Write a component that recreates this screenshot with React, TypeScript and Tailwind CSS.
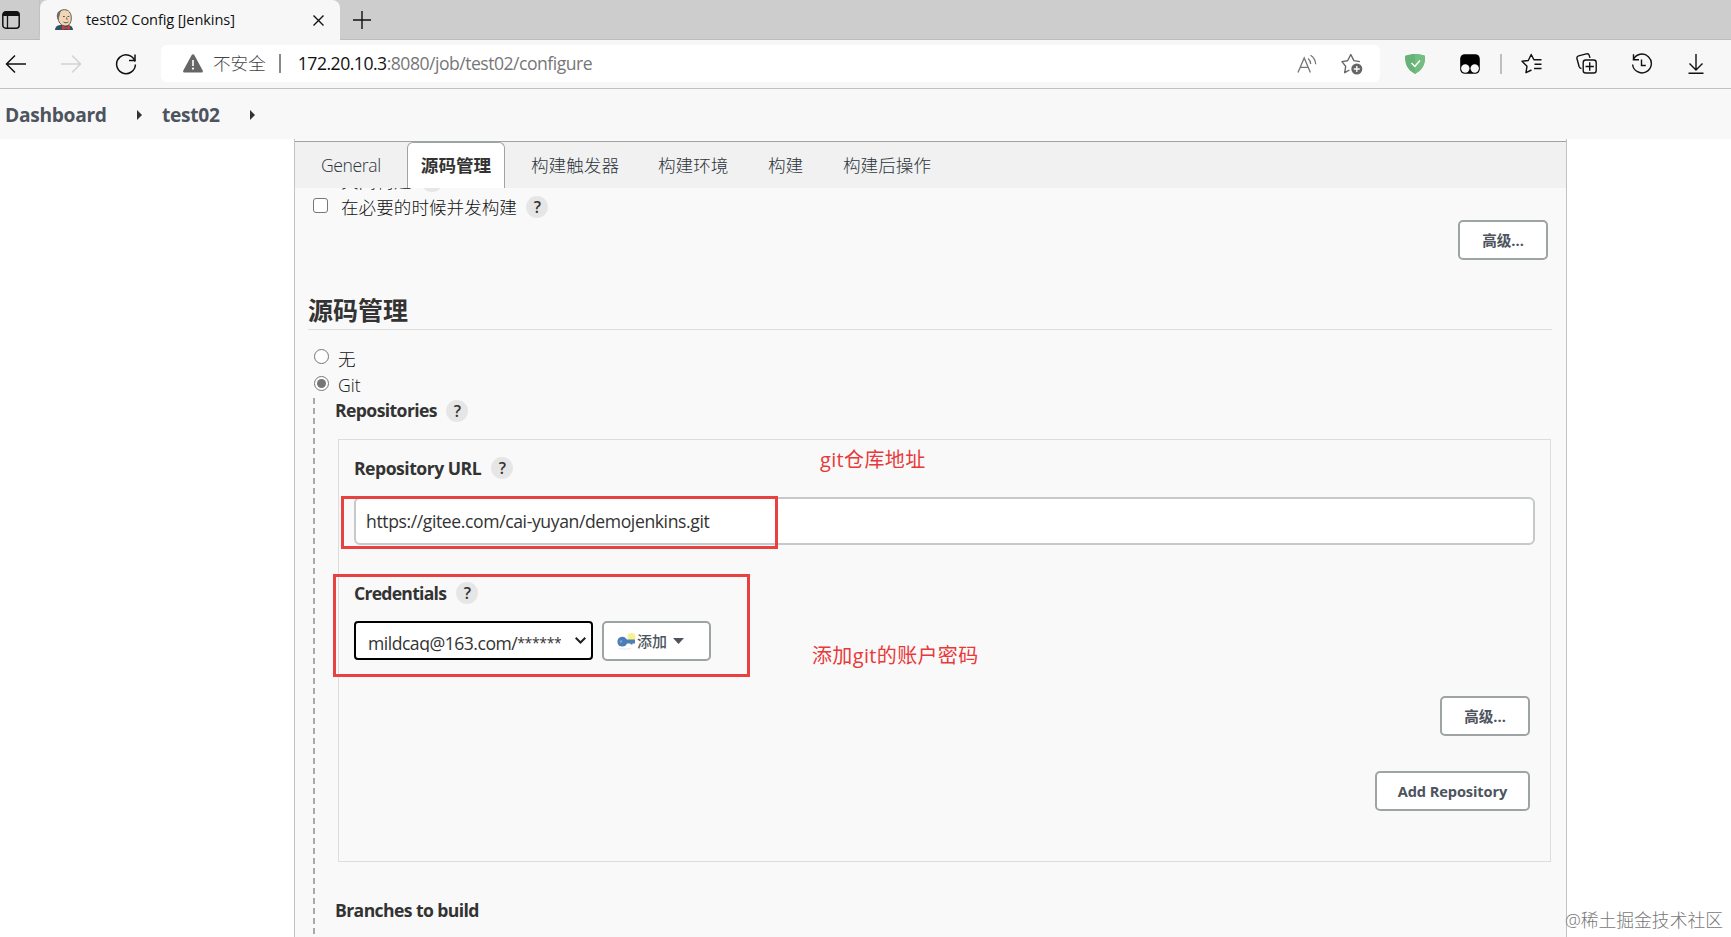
import React from 'react';
import { clsx } from 'clsx';

const tabs = [
  { label: 'General', className: 'w-[112px] pl-[26px] tracking-[-0.4px]' },
  { label: '源码管理', active: true, className: 'w-[98px] justify-center' },
  { label: '构建触发器', className: 'w-[127px] pl-[26px]' },
  { label: '构建环境', className: 'w-[110px] pl-[26px]' },
  { label: '构建', className: 'w-[75px] pl-[26px]' },
  { label: '构建后操作', className: 'w-[127px] pl-[26px]' },
];

const JenkinsIcon = () => (
  <svg width="20" height="22" viewBox="0 0 20 22">
    <path d="M1 21c0-3 2-4.500 5-5h8c3 .5 5 2 5 5z" fill="#2f5068" />
    <path d="M4 8c0-5 2.500-7.300 6.500-7.300S17.500 4 17.300 9.500c-.2 4.500-2.300 7.500-5.500 7.500C7 17 4 13 4 8z" fill="#f0d6b7" stroke="#57463a" strokeWidth=".9" />
    <path d="M4 11C1.500 7 3 1.500 8 1 5.500 3.500 6.300 5 5.500 7z" fill="#6d6b6d" />
    <path d="M9 7.500h1.800M13.500 7.500h1.800M9.500 13c1.800 1.200 3.500 1 5-.2M12.500 8.500l.7 2.300" stroke="#4f4035" fill="none" strokeWidth=".9" />
    <path d="M8 16.500l4 1.700 4-1.700v4.200l-4-1.200-4 1.200z" fill="#d33833" />
  </svg>
);

const SidebarTabsIcon = () => (
  <svg width="20" height="20" viewBox="0 0 20 20" fill="none">
    <rect x="1.800" y="1.800" width="16.400" height="16.400" rx="3" stroke="#111" strokeWidth="1.500" />
    <path d="M2 4.500A3 3 0 0 1 5 1.500h10a3 3 0 0 1 3 3V6H2z" fill="#111" />
    <path d="M6.500 6v12" stroke="#111" strokeWidth="1.300" />
  </svg>
);

const BackIcon = ({ className }: { className?: string }) => (
  <svg width="22" height="20" viewBox="0 0 22 20" fill="none" stroke="currentColor" strokeWidth="1.500" className={className}>
    <path d="M21 10H1.500M10 1.500L1.500 10l8.500 8.500" />
  </svg>
);

const ReloadIcon = () => (
  <svg width="22" height="22" viewBox="0 0 22 22" fill="none" stroke="#111" strokeWidth="1.500">
    <path d="M20 8.500A9.400 9.400 0 1 0 20.400 11.500" />
    <path d="M20 1.500V7.500H14" />
  </svg>
);

const WarningIcon = () => (
  <svg width="20" height="19" viewBox="0 0 20 19">
    <path d="M8.700.9a1.500 1.500 0 0 1 2.600 0l8.400 15.600a1.400 1.400 0 0 1-1.300 2.100H1.600A1.400 1.400 0 0 1 .3 16.500z" fill="#666" />
    <path d="M10 6v6" stroke="#fff" strokeWidth="1.600" />
    <circle cx="10" cy="14.600" r="1.100" fill="#fff" />
  </svg>
);

const ReadAloudIcon = () => (
  <svg width="20" height="20" viewBox="0 0 20 20" fill="none" stroke="#767676" strokeWidth="1.300">
    <path d="M1 18.500L7.200 4l6.200 14.500M3.300 13.300h7.800" />
    <path d="M11 4.500c1.700 1.300 2.600 3 2.700 5.500M13.500 1.200c3.200 2 4.900 4.800 5.200 9" />
  </svg>
);

const AddFavoriteIcon = () => (
  <svg width="22" height="22" viewBox="0 0 22 22" fill="none">
    <path d="M8.500 17l-4.800 2.700 1-6.300L1 8.600l5.600-.9L9.800 1.500l3.100 6.100 6 1" stroke="#666" strokeWidth="1.400" strokeLinejoin="round" />
    <circle cx="15.800" cy="16" r="5.500" fill="#666" />
    <path d="M15.800 13v6M12.800 16h6" stroke="#fff" strokeWidth="1.300" />
  </svg>
);

const ShieldIcon = () => (
  <svg width="20" height="20" viewBox="0 0 20 20">
    <path d="M10 0c3 0 6.700.5 9.300 1.600.4.200.7.500.7 1 .1 7.500-2 13.200-10 17.400C2 15.800-.1 10.100 0 2.600c0-.5.3-.8.7-1C3.300.5 7 0 10 0z" fill="#67b279" />
    <path d="M10 0c3 0 6.700.5 9.300 1.600.4.200.7.500.7 1 .1 7.500-2 13.200-10 17.400z" fill="#74bd80" />
    <path d="M6.500 9l3.300 3.500L15 6.500" stroke="#fff" strokeWidth="1.500" fill="none" />
  </svg>
);

const TampermonkeyIcon = () => (
  <svg width="20" height="20" viewBox="0 0 20 20">
    <rect x=".2" y=".2" width="19.600" height="19.600" rx="4.500" fill="#000" />
    <circle cx="5.300" cy="14.500" r="4.200" fill="#f7f7f7" />
    <circle cx="14.700" cy="14.500" r="4.200" fill="#f7f7f7" />
  </svg>
);

const FavoritesIcon = () => (
  <svg width="21" height="21" viewBox="0 0 21 21" fill="none" stroke="#111" strokeWidth="1.400" strokeLinejoin="round">
    <path d="M10.500 17L5 19.700l1-6.500L1 8.300l6.300-.8L10.200 1.500l2.700 5.300H20.500" />
    <path d="M13.500 11.200h7M13 15.500h7.500" />
  </svg>
);

const CollectionsIcon = () => (
  <svg width="21" height="21" viewBox="0 0 21 21" fill="none" stroke="#111" strokeWidth="1.400">
    <rect x="7.200" y="7" width="13" height="13" rx="2.600" />
    <path d="M13.700 9.300v8.400M9.500 13.500h8.400" />
    <path d="M5.500 15.500c-1.500 0-2-.7-2.400-2L1 5.800c-.4-1.500.2-2.500 1.600-2.900L10.300.9c1.600-.4 2.600.2 3 1.700l.7 2.300" />
  </svg>
);

const HistoryIcon = () => (
  <svg width="22" height="22" viewBox="0 0 22 22" fill="none" stroke="#111" strokeWidth="1.400">
    <path d="M2.300 6.800A9.400 9.400 0 1 1 1.600 11.500" />
    <path d="M2.500 1.300v5.500H8M10.500 6.500v6h4.300" />
  </svg>
);

const DownloadIcon = () => (
  <svg width="16" height="20" viewBox="0 0 16 20" fill="none" stroke="#111" strokeWidth="1.400">
    <path d="M8 0v15.500M1.500 9.500L8 16l6.500-6.500M.5 19.200h15" />
  </svg>
);

const KeyIcon = () => (
  <svg width="20" height="18" viewBox="0 0 20 18">
    <circle cx="14.500" cy="4" r="4" fill="#f7f190" />
    <path d="M2 15.500c3 .8 8 .8 12 0" stroke="#e9e9e9" strokeWidth="1.200" fill="none" />
    <path d="M8 6.500h10v4h-2.500v1h-2v-1H8z" fill="#4d7fb3" />
    <circle cx="5.300" cy="8.700" r="4.900" fill="#4d7cb6" />
    <circle cx="4" cy="8.500" r="1.300" fill="#7ea6d1" />
  </svg>
);

const BreadcrumbArrow = () => (
  <svg width="5" height="10" viewBox="0 0 5 10">
    <path d="M0 0l5 5-5 5z" fill="#333" />
  </svg>
);

const Help = () => (
  <span className="flex h-[22px] w-[22px] shrink-0 items-center justify-center rounded-full bg-[#e6e6e6] pl-px text-[16px] font-semibold text-[#333]">
    ?
  </span>
);

const Button = ({ className, children }: { className?: string; children: React.ReactNode }) => (
  <button className={clsx('flex h-10 items-center justify-center rounded-[5px] border-2 border-[#9ea4a4] bg-white pt-px text-[14.6px] font-bold text-[#4d545d]', className)}>
    {children}
  </button>
);

const Radio = ({ checked }: { checked?: boolean }) => (
  <span className="-mt-[5px] flex h-[15px] w-[15px] items-center justify-center rounded-full border border-[#767676] bg-white">
    {checked && <span className="h-[9px] w-[9px] rounded-full bg-[#767676]" />}
  </span>
);

const BrowserChrome = () => (
  <header>
    <div className="flex h-10 border-b border-[#bdbdbd] bg-[#cdcdcd]">
      <div className="flex w-10 items-center rounded-br-md border-r border-[#c2c2c2] pl-px">
        <SidebarTabsIcon />
      </div>
      <div className="flex h-10 w-[300px] items-center rounded-t-lg bg-[#f7f7f7] pl-[14px] pr-[16px]">
        <JenkinsIcon />
        <span className="ml-[12px] flex-1 whitespace-nowrap text-[14.6px] tracking-[-0.1px] text-[#111]">test02 Config [Jenkins]</span>
        <svg width="11" height="11" viewBox="0 0 11 11" stroke="#111" strokeWidth="1.400" className="mt-px">
          <path d="M.5.5l10 10M10.500.5l-10 10" />
        </svg>
      </div>
      <div className="flex items-center pl-[13px]">
        <svg width="18" height="18" viewBox="0 0 18 18" stroke="#111" strokeWidth="1.400">
          <path d="M9 0v18M0 9h18" />
        </svg>
      </div>
    </div>
    <div className="flex h-[49px] items-center border-b border-[#c0c0c0] bg-[#f7f7f7] pb-px pl-[5px]">
      <BackIcon className="text-[#111]" />
      <BackIcon className="ml-[33px] rotate-180 text-[#d2d2d2]" />
      <span className="ml-[33px]"><ReloadIcon /></span>
      <div className="ml-[24px] flex h-[37px] w-[1219px] items-center rounded-md bg-white pl-[22px] text-[17.6px]">
        <WarningIcon />
        <span className="ml-[10px] font-light text-[#444]">不安全</span>
        <span className="ml-[13px] h-[19px] w-[2px] bg-[#8a8a8a]" />
        <span className="ml-[17px] flex-1 whitespace-nowrap tracking-[-0.5px] text-[#777]">
          <span className="text-[#111]">172.20.10.3</span>:8080/job/test02/configure
        </span>
        <ReadAloudIcon />
        <span className="ml-[24px] mr-[17px]"><AddFavoriteIcon /></span>
      </div>
      <div className="flex items-center pl-[25px]">
        <ShieldIcon />
        <span className="ml-[35px]"><TampermonkeyIcon /></span>
        <span className="ml-[20px] h-[20px] w-[2px] bg-[#bfbfbf]" />
        <span className="ml-[19px]"><FavoritesIcon /></span>
        <span className="ml-[34px]"><CollectionsIcon /></span>
        <span className="ml-[34px]"><HistoryIcon /></span>
        <span className="ml-[35px]"><DownloadIcon /></span>
      </div>
    </div>
  </header>
);

const RepositoryPanel = () => (
  <div className="relative ml-[2px] mt-[15px] flex h-[423px] w-[1213px] flex-col border border-[#dcdede] px-[15px]">
    <div className="mt-[16px] flex h-[24px] items-center">
      <span className="w-[137px] whitespace-nowrap text-[17.6px] font-bold tracking-[-0.5px]">Repository URL</span>
      <Help />
    </div>
    <div className="mt-[17px] flex h-[48px] items-center whitespace-nowrap rounded-md border-2 border-[#c5c9c9] bg-white pl-[10px] pt-px text-[17.6px] tracking-[-0.4px]">
      https://gitee.com/cai-yuyan/demojenkins.git
    </div>
    <div className="mt-[36px] flex h-[24px] items-center">
      <span className="w-[102px] whitespace-nowrap text-[17.6px] font-bold tracking-[-0.75px]">Credentials</span>
      <Help />
    </div>
    <div className="mt-[16px] flex">
      <div className="flex h-[39px] w-[239px] justify-between rounded-[4px] border-2 border-black bg-white pl-[12px] pr-[5px]">
        <span className="h-[29px] overflow-hidden whitespace-nowrap pt-[7px] text-[17.6px] leading-[26px] tracking-[-0.5px]">
          mildcaq@163.com/<span className="align-[2px] text-[14px] leading-none tracking-[-0.35px]">******</span>
        </span>
        <svg width="11" height="7" viewBox="0 0 11 7" fill="none" stroke="#222" strokeWidth="2" className="mt-[14px]">
          <path d="M.7.7l4.800 4.800L10.300.7" />
        </svg>
      </div>
      <Button className="ml-[9px] w-[109px] pr-[12px] !font-medium">
        <KeyIcon />
        <span className="text-[15px]">添加</span>
        <svg width="11" height="6" viewBox="0 0 11 6" className="-mt-[2px] ml-[6px]">
          <path d="M0 0h11L5.500 6z" fill="#4d545d" />
        </svg>
      </Button>
    </div>
    <div className="mr-[5px] mt-[35px] flex flex-col items-end gap-[35px]">
      <Button className="w-[90px]">高级...</Button>
      <Button className="w-[155px] tracking-[-0.1px]">Add Repository</Button>
    </div>

    {/* Annotations */}
    <div className="absolute left-[2px] top-[56px] h-[53px] w-[437px] border-3 border-[#e84142]" />
    <div className="absolute -left-[6px] top-[134px] h-[103px] w-[417px] border-3 border-[#e84142]" />
    <span className="absolute left-[481px] top-[6px] whitespace-nowrap text-[20px] leading-[28px] tracking-[0.35px] text-[#e8393a]">git仓库地址</span>
    <span className="absolute left-[473px] top-[202px] whitespace-nowrap text-[20px] leading-[28px] tracking-[0.35px] text-[#e8393a]">添加git的账户密码</span>
  </div>
);

export default function App() {
  return (
    <div className="relative flex h-[937px] w-[1731px] flex-col overflow-hidden bg-white font-['Open_Sans','Noto_Sans_CJK_SC',sans-serif] text-[#333]">
      <BrowserChrome />

      {/* Breadcrumbs */}
      <nav className="flex h-[50px] items-center bg-[#f8f8f8] pb-[1px] pl-[5px] pt-[3px] text-[19.2px] font-bold tracking-[-0.3px] text-[#4d545d]">
        <span className="w-[132px]">Dashboard</span>
        <BreadcrumbArrow />
        <span className="ml-[20px] w-[88px]">test02</span>
        <BreadcrumbArrow />
      </nav>

      <main className="ml-[294px] flex w-[1273px] flex-1 flex-col overflow-hidden border-x border-[#bfc3c3] bg-[#f9f9f9]">
        <div className="mt-[2px] flex h-[47px] shrink-0 border-t border-[#9ea4a4] bg-[#f1f1f1]">
          {tabs.map((tab) => (
            <div
              key={tab.label}
              className={clsx(
                'flex items-center whitespace-nowrap text-[17.6px]',
                tab.active
                  ? 'rounded-t-md border-x border-t border-[#9ea4a4] bg-white font-bold text-[#333]'
                  : 'font-light text-[#2d343c]',
                tab.className
              )}
            >
              {tab.label}
            </div>
          ))}
        </div>

        <div className="flex flex-1 flex-col overflow-hidden pl-[13px] text-[17.6px]">
          {/* Row scrolled halfway under the tab bar */}
          <div className="-mt-[20px] flex h-[26px] shrink-0 items-center pl-[33px] font-light text-[#111]">
            <span className="w-[80px]">关闭构建</span>
            <Help />
          </div>
          <div className="flex h-[26px] shrink-0 items-center pl-[5px] font-light text-[#111]">
            <span className="-mt-[3px] h-[15px] w-[15px] rounded-[3px] border border-[#767676] bg-white" />
            <span className="ml-[13px] w-[185px]">在必要的时候并发构建</span>
            <Help />
          </div>
          <div className="flex justify-end pr-[18px]">
            <Button className="w-[90px]">高级...</Button>
          </div>

          <h2 className="mr-[14px] mt-[32px] flex h-[38px] shrink-0 items-center border-b border-[#dcdede] pt-px text-[25px] font-bold">
            源码管理
          </h2>

          <div className="mt-[16px] flex h-[26px] shrink-0 items-center pl-[6px] font-light text-[#111]">
            <Radio />
            <span className="ml-[9px]">无</span>
          </div>
          <div className="mt-px flex h-[26px] shrink-0 items-center pl-[6px] font-light text-[#111]">
            <Radio checked />
            <span className="-mt-[2px] ml-[9px]">Git</span>
          </div>

          <div className="-mt-px flex flex-1 pl-[5px]">
            <div className="w-[2px] bg-[repeating-linear-gradient(to_bottom,#a9a9a9_0,#a9a9a9_6px,transparent_6px,transparent_10px)]" />
            <div className="flex flex-col pl-[20px]">
              <div className="flex h-[25px] items-center">
                <span className="w-[111px] font-bold tracking-[-0.6px]">Repositories</span>
                <Help />
              </div>
              <div className="ml-px mt-px">
                <RepositoryPanel />
              </div>
              <div className="mt-[35px] flex h-[26px] items-center whitespace-nowrap font-bold tracking-[-0.6px]">Branches to build</div>
            </div>
          </div>
        </div>
      </main>

      <div className="absolute left-[1565px] top-[907px] whitespace-nowrap text-[17.8px] font-light leading-[26px] text-[#777] [text-shadow:1px_1px_0_#fff]">
        @稀土掘金技术社区
      </div>
    </div>
  );
}
